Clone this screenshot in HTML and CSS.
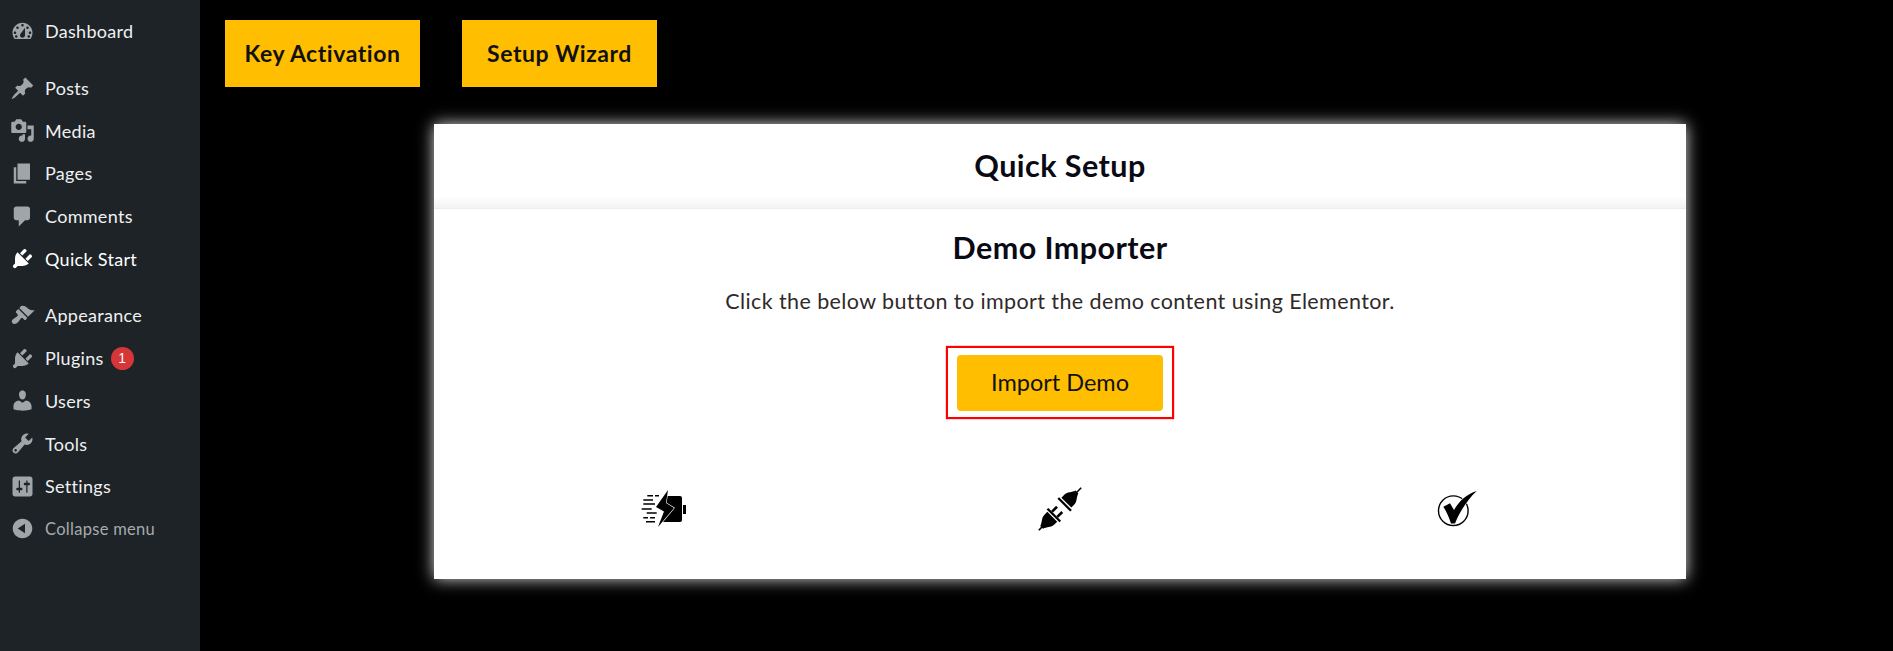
FILE: index.html
```html
<!DOCTYPE html>
<html lang="en">
<head>
<meta charset="utf-8">
<title>Quick Setup</title>
<link rel="stylesheet" href="styles.css">
</head>
<body>
<div class="app">
  <nav class="sidebar">
    <ul class="menu">
      <li class="item"><svg class="ico" viewBox="0 0 20 20"><path fill-rule="evenodd" d="M3.76 16h12.48c1.1-1.37 1.76-3.11 1.76-5 0-4.42-3.58-8-8-8s-8 3.58-8 8c0 1.89.66 3.63 1.76 5zM10 4c.55 0 1 .45 1 1s-.45 1-1 1-1-.45-1-1 .45-1 1-1zM6 6c.55 0 1 .45 1 1s-.45 1-1 1-1-.45-1-1 .45-1 1-1zm8 0c.55 0 1 .45 1 1s-.45 1-1 1-1-.45-1-1 .45-1 1-1zm-5.37 5.55L12 7v6c0 1.1-.9 2-2 2s-2-.9-2-2c0-.57.24-1.08.63-1.45zM4 10c.55 0 1 .45 1 1s-.45 1-1 1-1-.45-1-1 .45-1 1-1zm12 0c.55 0 1 .45 1 1s-.45 1-1 1-1-.45-1-1 .45-1 1-1zM5 13c.55 0 1 .45 1 1s-.45 1-1 1-1-.45-1-1 .45-1 1-1zm10 0c.55 0 1 .45 1 1s-.45 1-1 1-1-.45-1-1 .45-1 1-1z"/></svg><span>Dashboard</span></li>
    </ul>
    <ul class="menu">
      <li class="item"><svg class="ico" viewBox="0 0 20 20"><path d="M10.44 3.02l1.82-1.82 6.36 6.35-1.83 1.82c-1.05-.68-2.48-.57-3.41.36l-.75.75c-.92.93-1.04 2.35-.35 3.41l-1.83 1.82-2.41-2.41-2.8 2.79c-.42.42-3.38 2.71-3.8 2.29s1.86-3.39 2.28-3.81l2.79-2.79L4.1 9.36l1.83-1.82c1.05.69 2.48.57 3.4-.36l.75-.75c.93-.92 1.05-2.35.36-3.41z"/></svg><span>Posts</span></li>
      <li class="item"><svg class="ico" viewBox="0 0 20 20"><path fill-rule="evenodd" d="M13 11V4c0-.55-.45-1-1-1h-1.67L9 1H5L3.67 3H2c-.55 0-1 .45-1 1v7c0 .55.45 1 1 1h10c.55 0 1-.45 1-1zM7 4.5c1.38 0 2.5 1.12 2.5 2.5S8.38 9.5 7 9.5 4.5 8.38 4.5 7 5.62 4.5 7 4.5zM14 6h5v10.5c0 1.38-1.12 2.5-2.5 2.5S14 17.88 14 16.5s1.12-2.5 2.5-2.5c.17 0 .34.02.5.05V9h-3V6zm-4 8.05V13h2v3.5c0 1.38-1.12 2.5-2.5 2.5S7 17.88 7 16.5 8.12 14 9.5 14c.17 0 .34.02.5.05z"/></svg><span>Media</span></li>
      <li class="item"><svg class="ico" viewBox="0 0 20 20"><path d="M6 15V2h10v13H6zm-1 1h8v2H3V5h2v11z"/></svg><span>Pages</span></li>
      <li class="item"><svg class="ico" viewBox="0 0 20 20"><path d="M5 2h9c1.1 0 2 .9 2 2v7c0 1.1-.9 2-2 2h-2l-5 5v-5H5c-1.1 0-2-.9-2-2V4c0-1.1.9-2 2-2z"/></svg><span>Comments</span></li>
      <li class="item item-active"><svg class="ico" viewBox="0 0 20 20"><path d="M13.11 4.36L9.87 7.6 8 5.73l3.24-3.24c.35-.34 1.05-.2 1.56.32.52.51.66 1.21.31 1.55zm-8 1.77l.91-1.12 9.01 9.01-1.19.84c-.71.71-2.63 1.16-3.82 1.16H6.14L4.9 17.26c-.59.59-1.54.59-2.12 0-.59-.58-.59-1.53 0-2.12l1.24-1.24v-3.88c0-1.13.4-3.19 1.09-3.89zm7.26 3.97l3.24-3.24c.34-.35 1.04-.21 1.55.31.52.51.66 1.21.31 1.55l-3.24 3.25z"/></svg><span>Quick Start</span></li>
    </ul>
    <ul class="menu">
      <li class="item"><svg class="ico" viewBox="0 0 20 20"><path d="M14.48 11.06L7.41 3.99l1.5-1.5c.5-.56 2.3-.47 3.51.32 1.21.8 1.43 1.28 2.91 2.1 1.18.64 2.45 1.26 4.45.85zm-.71.71L6.7 4.7 4.93 6.47c-.39.39-.39 1.02 0 1.41l1.06 1.06c.39.39.39 1.03 0 1.42-.6.6-1.43 1.11-2.21 1.69-.35.26-.7.53-1.01.84C1.43 13.23.99 15.24 2 16.25s3.02.57 4.36-.77c.31-.31.58-.66.84-1.01.58-.78 1.09-1.61 1.69-2.21.39-.39 1.03-.39 1.42 0l1.06 1.06c.39.39 1.02.39 1.41 0z"/></svg><span>Appearance</span></li>
      <li class="item"><svg class="ico" viewBox="0 0 20 20"><path d="M13.11 4.36L9.87 7.6 8 5.73l3.24-3.24c.35-.34 1.05-.2 1.56.32.52.51.66 1.21.31 1.55zm-8 1.77l.91-1.12 9.01 9.01-1.19.84c-.71.71-2.63 1.16-3.82 1.16H6.14L4.9 17.26c-.59.59-1.54.59-2.12 0-.59-.58-.59-1.53 0-2.12l1.24-1.24v-3.88c0-1.13.4-3.19 1.09-3.89zm7.26 3.97l3.24-3.24c.34-.35 1.04-.21 1.55.31.52.51.66 1.21.31 1.55l-3.24 3.25z"/></svg><span>Plugins</span><b class="badge">1</b></li>
      <li class="item"><svg class="ico" viewBox="0 0 20 20"><path d="M10 9.25c-2.27 0-2.73-3.44-2.73-3.44C7 4.02 7.82 2 9.97 2c2.16 0 2.98 2.02 2.71 3.81 0 0-.41 3.44-2.68 3.44zm0 2.57L12.72 10c2.39 0 4.52 2.33 4.52 4.53v2.49s-3.65 1.13-7.24 1.13c-3.65 0-7.24-1.13-7.24-1.13v-2.49c0-2.25 1.94-4.48 4.47-4.48z"/></svg><span>Users</span></li>
      <li class="item"><svg class="ico" viewBox="0 0 20 20"><path fill-rule="evenodd" d="M16.68 9.77c-1.34 1.34-3.3 1.67-4.95.99l-5.41 6.52c-.99.99-2.59.99-3.58 0s-.99-2.59 0-3.57l6.52-5.42c-.68-1.65-.35-3.61.99-4.95 1.28-1.28 3.12-1.62 4.72-1.06l-2.89 2.89 2.82 2.82 2.86-2.87c.53 1.58.18 3.39-1.08 4.65zM3.81 16.21c.4.39 1.04.39 1.43 0 .4-.4.4-1.04 0-1.43-.39-.4-1.03-.4-1.43 0-.39.39-.39 1.03 0 1.43z"/></svg><span>Tools</span></li>
      <li class="item"><svg class="ico" viewBox="0 0 20 20"><path fill-rule="evenodd" d="M18 16V4c0-1.1-.9-2-2-2H4c-1.1 0-2 .9-2 2v12c0 1.1.9 2 2 2h12c1.1 0 2-.9 2-2zM8 11h1c.55 0 1 .45 1 1s-.45 1-1 1H8v1.5c0 .28-.22.5-.5.5s-.5-.22-.5-.5V13H6c-.55 0-1-.45-1-1s.45-1 1-1h1V5.5c0-.28.22-.5.5-.5s.5.22.5.5V11zm5-2h-1c-.55 0-1-.45-1-1s.45-1 1-1h1V5.5c0-.28.22-.5.5-.5s.5.22.5.5V7h1c.55 0 1 .45 1 1s-.45 1-1 1h-1v5.5c0 .28-.22.5-.5.5s-.5-.22-.5-.5V9z"/></svg><span>Settings</span></li>
      <li class="item item-collapse"><svg class="ico" viewBox="0 0 20 20"><path fill-rule="evenodd" d="M10 2.16c4.33 0 7.84 3.51 7.84 7.84s-3.51 7.84-7.84 7.84S2.16 14.33 2.16 10 5.71 2.16 10 2.16zm2 11.72V6.12L6.18 9.97z"/></svg><span>Collapse menu</span></li>
    </ul>
  </nav>
  <main class="main">
    <div class="tabs">
      <a class="tab">Key Activation</a>
      <a class="tab">Setup Wizard</a>
    </div>
    <section class="card">
      <header class="card-head"><h1>Quick Setup</h1></header>
      <div class="card-body">
        <h2>Demo Importer</h2>
        <p>Click the below button to import the demo content using Elementor.</p>
        <div class="highlight"><a class="import">Import Demo</a></div>
        <div class="steps">
          <div class="step">
            <svg class="step-ico" viewBox="0 0 50 50">
              <path d="M23 12h17a2 2 0 0 1 2 2v22a2 2 0 0 1-2 2H23z"/>
              <rect x="43" y="21" width="3" height="9"/>
              <path d="M7.3 11.700H13M15 11.700h4M3.300 16H13M3.300 20H15M1.700 25H11.700M6.700 29H16.700M3.300 33.700H8M10 33.700H15M6 37.700H15" stroke="#000" stroke-width="1.500" fill="none"/>
              <path d="M28 6L16 23l8 4.500L18 43 34 24l-8-5z" stroke="#fff" stroke-width="1.200" paint-order="stroke"/>
            </svg>
          </div>
          <div class="step">
            <svg class="step-ico" viewBox="0 0 50 50">
              <g transform="rotate(45 25 25)">
                <path d="M24.200-5h1.600v7h-1.600z"/>
                <path d="M23 1h4c1 4 5 6.500 5 11v4H18v-4c0-4.500 4-7 5-11z"/>
                <rect x="16" y="17.300" width="18" height="2.300"/>
                <rect x="20" y="25.500" width="2.600" height="7"/>
                <rect x="27.400" y="25.500" width="2.600" height="7"/>
                <rect x="16" y="32.500" width="18" height="2.300"/>
                <path d="M18 36h14v4c0 4.500-4 7-5 11h-4c-1-4-5-6.500-5-11z"/>
                <path d="M24.200 50h1.600v5h-1.600z"/>
              </g>
            </svg>
          </div>
          <div class="step">
            <svg class="step-ico" viewBox="0 0 50 50">
              <circle cx="23.300" cy="26.700" r="14.800" fill="none" stroke="#000" stroke-width="1.400"/>
              <path d="M13.300 22.700L20 19.300 24 26C29 17 37 10 46.700 7 38 15 30 27 25 39.500H21C19 33 16 27 13.300 22.700z" stroke="#fff" stroke-width="1.400" paint-order="stroke"/>
            </svg>
          </div>
        </div>
      </div>
    </section>
  </main>
</div>
</body>
</html>
```

FILE: styles.css
```css
* { box-sizing: border-box; }
html, body { margin: 0; height: 100%; }
body { background: #000; font-family: "Lato", "Open Sans", sans-serif; overflow: hidden; }
.app { display: flex; height: 651px; }

.sidebar { width: 200px; flex: none; background: #1d2327; padding-top: 10px; display: flex; flex-direction: column; gap: 14px; }
.menu { list-style: none; margin: 0; padding: 0; }
.item { display: flex; align-items: center; height: 42.7px; padding-left: 10px; color: #f0f0f1; font-size: 18px; letter-spacing: .3px; }
.ico { width: 25px; height: 25px; fill: #a0a5aa; margin-right: 10px; flex: none; }
.item-active { color: #fff; }
.item-active .ico { fill: #fff; }
.item-collapse { color: #a7aaad; font-size: 16.5px; height: 42px; }
.badge { display: flex; align-items: center; justify-content: center; width: 23px; height: 23px; margin-left: 7px; border-radius: 50%; background: #d63638; color: #fff; font: 400 14px "Liberation Sans", sans-serif; letter-spacing: 0; }

.main { flex: 1; display: flex; flex-direction: column; }
.tabs { display: flex; gap: 42px; padding: 20px 0 0 25px; }
.tab { width: 195px; height: 67px; padding-bottom: 1px; display: flex; align-items: center; justify-content: center; background: #ffbe00; color: #111; font-size: 23px; font-weight: 700; letter-spacing: .55px; }

.card { width: 1252px; height: 455px; margin: 37px 0 0 234px; background: #fff; box-shadow: 0 0 15px rgba(255,255,255,.85); display: flex; flex-direction: column; }
.card-head { height: 85px; padding-bottom: 2px; display: flex; align-items: center; justify-content: center; background: linear-gradient(to bottom, #fff 86%, #f3f3f3 100%); border-bottom: 1px solid #eee; }
h1, h2 { margin: 0; color: #0a0a14; font-size: 30.5px; line-height: 36px; font-weight: 700; letter-spacing: .45px; }
.card-body { display: flex; flex-direction: column; align-items: center; padding-top: 20px; }
p { margin: 22px 0 0; color: #2f2a2a; font-size: 21.5px; line-height: 28px; letter-spacing: .4px; }
.highlight { margin-top: 31px; width: 228px; height: 73px; border: 2px solid #f00; box-shadow: 0 0 1px #f00; padding: 7px 9px 6px; }
.import { display: flex; align-items: center; justify-content: center; height: 56px; padding-bottom: 2px; background: #ffbe00; border-radius: 4px; color: #111; font-size: 23.5px; }
.steps { display: grid; grid-template-columns: repeat(3, 395px); margin-top: 65px; }
.step { display: flex; justify-content: center; }
.step-ico { width: 50px; height: 50px; overflow: visible; }
```
